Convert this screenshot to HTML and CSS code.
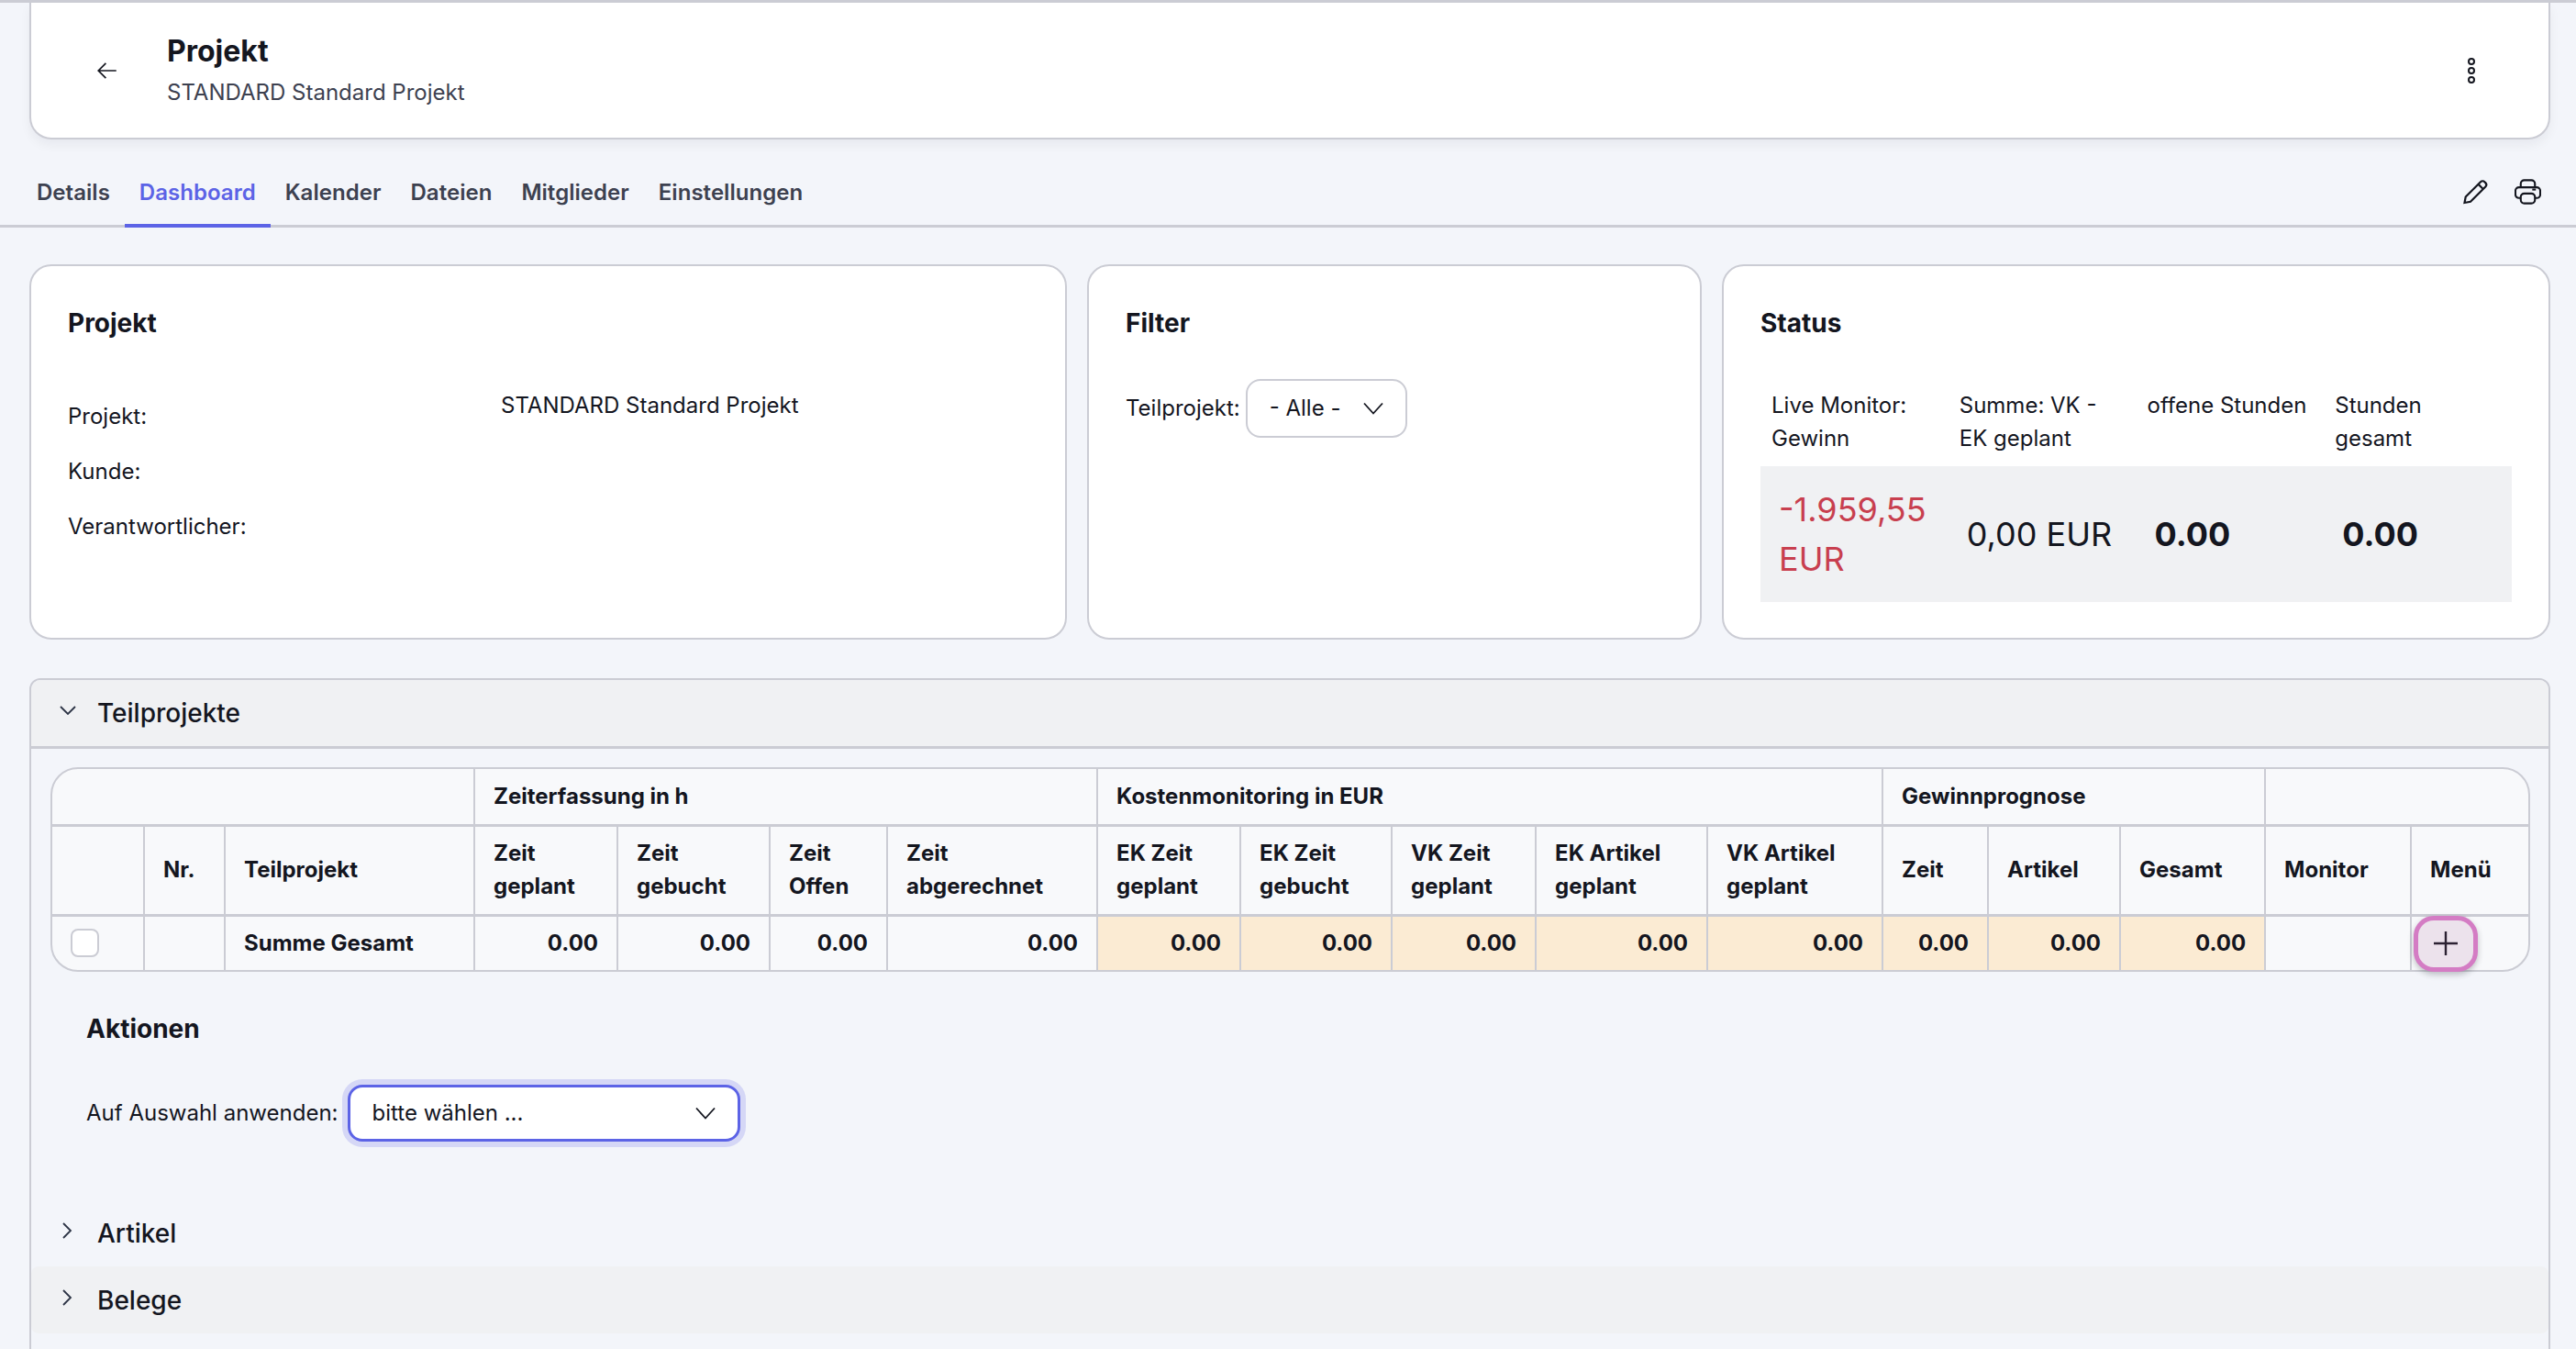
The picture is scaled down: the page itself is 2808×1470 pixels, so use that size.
FILE: index.html
```html
<!DOCTYPE html>
<html lang="de">
<head>
<meta charset="UTF-8">
<meta name="viewport" content="width=device-width, initial-scale=1.0">
<title>Projekt</title>
<link rel="stylesheet" href="styles.css">
</head>
<body>

<!-- Kopfzeile -->
<header class="page-head">
    <svg class="icon-back" viewBox="0 0 24 24"><path d="M10.5 19.5 3 12l7.5-7.5M3 12h18"/></svg>
    <div class="page-title">
        <h1>Projekt</h1>
        <p>STANDARD Standard Projekt</p>
    </div>
    <svg class="icon-more" viewBox="0 0 8 28">
        <circle cx="4" cy="4" r="3"/><circle cx="4" cy="14" r="3"/><circle cx="4" cy="24" r="3"/>
    </svg>
</header>

<!-- Tabs -->
<nav class="tabs">
    <a class="tab">Details</a>
    <a class="tab active">Dashboard</a>
    <a class="tab">Kalender</a>
    <a class="tab">Dateien</a>
    <a class="tab">Mitglieder</a>
    <a class="tab">Einstellungen</a>
    <div class="tab-tools">
        <svg class="icon-tool" viewBox="0 0 28 28"><path d="M2 26l1.200-6.500L19.500 3.200c1.300-1.300 3.200-1.300 4.400 0l.9.900c1.200 1.200 1.200 3.100 0 4.400L8.500 24.800 2 26zM17 5.700l5.300 5.300"/></svg>
        <svg class="icon-tool" viewBox="0 0 30 28"><path d="M7 9V5a4 4 0 0 1 4-4h8a4 4 0 0 1 4 4v4M7 21H5a4 4 0 0 1-4-4v-4a4 4 0 0 1 4-4h20a4 4 0 0 1 4 4v4a4 4 0 0 1-4 4h-2"/><rect x="7" y="16" width="16" height="11" rx="4"/><path d="M20 11.500h4"/></svg>
    </div>
</nav>

<!-- Karten -->
<section class="cards">
    <div class="card">
        <h2>Projekt</h2>
        <div class="info">
            <div class="info-labels">
                <div>Projekt:</div>
                <div>Kunde:</div>
                <div>Verantwortlicher:</div>
            </div>
            <div class="info-value">STANDARD Standard Projekt</div>
        </div>
    </div>
    <div class="card">
        <h2>Filter</h2>
        <div class="filter">
            <label>Teilprojekt:</label>
            <div class="select select-small">
                <span>- Alle -</span>
                <svg class="chevron" viewBox="0 0 22 14"><path d="M1 1.500l10 11 10-11"/></svg>
            </div>
        </div>
    </div>
    <div class="card">
        <h2>Status</h2>
        <div class="status">
            <div class="status-head">Live Monitor: Gewinn</div>
            <div class="status-head">Summe: VK - EK geplant</div>
            <div class="status-head">offene Stunden</div>
            <div class="status-head">Stunden gesamt</div>
            <div class="status-val negative">-1.959,55 EUR</div>
            <div class="status-val">0,00 EUR</div>
            <div class="status-val strong">0.00</div>
            <div class="status-val strong">0.00</div>
        </div>
    </div>
</section>

<!-- Akkordeon -->
<section class="accordion">
    <div class="acc-head open">
        <svg class="acc-down" viewBox="0 0 18 10"><path d="M1 1l8 8 8-8"/></svg>
        <span>Teilprojekte</span>
    </div>
    <div class="acc-body">
        <div class="table-wrap">
            <table class="grid">
                <colgroup>
                    <col class="c-check"><col class="c-nr"><col class="c-name">
                    <col class="c-a"><col class="c-b"><col class="c-c"><col class="c-d">
                    <col class="c-e"><col class="c-f"><col class="c-g"><col class="c-h"><col class="c-i">
                    <col class="c-j"><col class="c-k"><col class="c-l">
                    <col class="c-m"><col class="c-n">
                </colgroup>
                <tr class="row-group">
                    <th colspan="3"></th>
                    <th colspan="4">Zeiterfassung in h</th>
                    <th colspan="5">Kostenmonitoring in EUR</th>
                    <th colspan="3">Gewinnprognose</th>
                    <th colspan="2"></th>
                </tr>
                <tr class="row-head">
                    <th></th>
                    <th>Nr.</th>
                    <th>Teilprojekt</th>
                    <th>Zeit<br>geplant</th>
                    <th>Zeit<br>gebucht</th>
                    <th>Zeit<br>Offen</th>
                    <th>Zeit<br>abgerechnet</th>
                    <th>EK Zeit<br>geplant</th>
                    <th>EK Zeit<br>gebucht</th>
                    <th>VK Zeit<br>geplant</th>
                    <th>EK Artikel<br>geplant</th>
                    <th>VK Artikel<br>geplant</th>
                    <th>Zeit</th>
                    <th>Artikel</th>
                    <th>Gesamt</th>
                    <th>Monitor</th>
                    <th>Menü</th>
                </tr>
                <tr class="row-sum">
                    <td><span class="checkbox"></span></td>
                    <td></td>
                    <td class="name">Summe Gesamt</td>
                    <td>0.00</td>
                    <td>0.00</td>
                    <td>0.00</td>
                    <td>0.00</td>
                    <td class="cost">0.00</td>
                    <td class="cost">0.00</td>
                    <td class="cost">0.00</td>
                    <td class="cost">0.00</td>
                    <td class="cost">0.00</td>
                    <td class="cost">0.00</td>
                    <td class="cost">0.00</td>
                    <td class="cost">0.00</td>
                    <td></td>
                    <td class="menu">
                        <button class="plus-btn">
                            <svg viewBox="0 0 26 26"><path d="M13 0v26M0 13h26"/></svg>
                        </button>
                    </td>
                </tr>
            </table>
        </div>

        <div class="actions">
            <h2>Aktionen</h2>
            <div class="action-row">
                <label>Auf Auswahl anwenden:</label>
                <div class="select select-focus">
                    <span>bitte wählen ...</span>
                    <svg class="chevron" viewBox="0 0 22 14"><path d="M1 1.500l10 11 10-11"/></svg>
                </div>
            </div>
        </div>
    </div>
    <div class="acc-head closed">
        <svg class="acc-right" viewBox="0 0 10 18"><path d="M1 1l8 8-8 8"/></svg>
        <span>Artikel</span>
    </div>
    <div class="acc-head closed shaded">
        <svg class="acc-right" viewBox="0 0 10 18"><path d="M1 1l8 8-8 8"/></svg>
        <span>Belege</span>
    </div>
</section>

</body>
</html>
```

FILE: styles.css
```css
* {
    box-sizing: border-box;
}
body {
    margin: 0;
    height: 100vh;
    overflow: hidden;
    background: #f3f5fa;
    color: #14161f;
    font-family: 'Inter', sans-serif;
    font-size: 24px;
    line-height: 36px;
    border-top: 3px solid #cbccd4;
}
h1, h2, p {
    margin: 0;
}
h2 {
    font-size: 28px;
    line-height: 40px;
    font-weight: 700;
}
svg {
    display: block;
    fill: none;
    stroke: #14161f;
}

/* Kopfzeile */
.page-head {
    display: flex;
    align-items: center;
    height: 149px;
    margin: 0 28px 0 32px;
    padding: 0 80px 0 70px;
    background: #fff;
    border: 2px solid #cbccd4;
    border-top: 0;
    border-radius: 0 0 24px 24px;
    box-shadow: 0 6px 12px rgba(20, 22, 31, 0.05);
}
.icon-back {
    width: 26px;
    height: 26px;
    stroke-width: 1.6;
}
.page-title {
    flex: 1;
    margin-left: 52px;
    padding-bottom: 3px;
}
.page-title h1 {
    font-size: 32px;
    line-height: 48px;
    font-weight: 700;
}
.page-title p {
    color: #3d4150;
    margin-top: 3px;
}
.icon-more {
    width: 8px;
    height: 28px;
    stroke-width: 2;
}

/* Tabs */
.tabs {
    display: flex;
    align-items: flex-end;
    height: 96px;
    padding: 0 38px 0 24px;
    border-bottom: 3px solid #cbccd4;
}
.tab {
    height: 96px;
    padding: 40px 16px 0;
    margin-bottom: -3px;
    color: #3d4150;
    font-weight: 600;
    letter-spacing: 0.03px;
    border-bottom: 4px solid transparent;
}
.tab.active {
    color: #5c63e6;
    border-bottom-color: #5c63e6;
}
.tab-tools {
    display: flex;
    align-items: center;
    gap: 28px;
    margin-left: auto;
    padding-bottom: 22px;
}
.icon-tool {
    width: 29px;
    height: 28px;
    stroke-width: 2.2;
}

/* Karten */
.cards {
    display: grid;
    grid-template-columns: 1131px 670px 903px;
    gap: 22px;
    margin: 40px 28px 0 32px;
}
.card {
    height: 409px;
    padding: 42px 40px 0;
    background: #fff;
    border: 2px solid #cbccd4;
    border-radius: 24px;
}
.info {
    display: flex;
    margin-top: 52px;
}
.info-labels {
    width: 472px;
    padding-top: 12px;
}
.info-labels div {
    margin-bottom: 24px;
}
.filter {
    display: flex;
    align-items: center;
    gap: 6px;
    margin-top: 41px;
}
.select {
    display: flex;
    align-items: center;
    justify-content: space-between;
    background: #fff;
    border-radius: 16px;
}
.select-small {
    width: 176px;
    height: 64px;
    padding: 0 24px;
    border: 2px solid #cbccd4;
}
.select-focus {
    width: 428px;
    height: 62px;
    padding: 0 24px;
    border: 3px solid #5c63e6;
    box-shadow: 0 0 0 6px #d5d7f6;
}
.chevron {
    width: 22px;
    height: 14px;
    stroke-width: 1.8;
    flex: none;
}
.status {
    display: grid;
    grid-template-columns: repeat(4, 1fr);
    margin-top: 52px;
}
.status-head {
    padding: 0 12px 12px;
}
.status-val {
    display: flex;
    align-items: center;
    min-height: 148px;
    padding: 20px;
    background: #f0f1f3;
    font-size: 36px;
    line-height: 54px;
}
.status-val.negative {
    color: #c83f4f;
}
.status-val.strong {
    font-weight: 700;
}

/* Akkordeon */
.accordion {
    margin: 42px 28px 0 32px;
    min-height: 800px;
    border: 2px solid #cbccd4;
    border-radius: 12px 12px 0 0;
}
.acc-head {
    display: flex;
    align-items: center;
    font-size: 28px;
    line-height: 40px;
    font-weight: 500;
}
.acc-head.open {
    height: 75px;
    padding-left: 30px;
    background: #f0f1f3;
    border-bottom: 3px solid #cbccd4;
    border-radius: 10px 10px 0 0;
}
.acc-down {
    width: 20px;
    height: 10px;
    margin: -6px 22px 0 0;
    stroke-width: 1.8;
    stroke: #2c3345;
}
.acc-head.closed {
    height: 73px;
    padding-left: 33px;
}
.acc-head.shaded {
    background: #f0f1f3;
    border-radius: 8px;
}
.acc-right {
    width: 12px;
    height: 18px;
    margin: -6px 27px 0 0;
    stroke-width: 1.8;
    stroke: #2c3345;
}
.acc-body {
    padding: 20px 20px 0 21px;
}

/* Tabelle */
.table-wrap {
    width: 2703px;
    background: #f8f9fb;
    border: 2px solid #cbccd4;
    border-radius: 30px;
}
.grid {
    width: 100%;
    table-layout: fixed;
    border-collapse: collapse;
    border-style: hidden;
}
.grid th, .grid td {
    padding: 0 20px;
    border: 2px solid #cbccd4;
    font-weight: 700;
    text-align: left;
}
.grid td {
    text-align: right;
}
.grid td.name, .grid td:first-child {
    text-align: left;
}
.grid .row-group th {
    height: 61px;
    border-bottom-width: 3px;
}
.grid .row-head th {
    height: 98px;
    border-bottom-width: 3px;
}
.grid .row-sum td {
    height: 60px;
}
.grid td.cost {
    background: #fbebd3;
}
.grid td.menu {
    padding: 0;
    position: relative;
}
.c-check { width: 100px; }
.c-nr { width: 88px; }
.c-name { width: 272px; }
.c-a { width: 156px; }
.c-b { width: 166px; }
.c-c { width: 128px; }
.c-d { width: 229px; }
.c-e { width: 156px; }
.c-f { width: 165px; }
.c-g { width: 157px; }
.c-h { width: 187px; }
.c-i { width: 191px; }
.c-j { width: 115px; }
.c-k { width: 144px; }
.c-l { width: 158px; }
.c-m { width: 159px; }
.c-n { width: 129px; }
.checkbox {
    display: block;
    width: 31px;
    height: 31px;
    background: #fff;
    border: 2px solid #cbccd4;
    border-radius: 8px;
}
.plus-btn {
    display: flex;
    align-items: center;
    justify-content: center;
    position: absolute;
    left: 2px;
    top: -1px;
    width: 70px;
    height: 61px;
    padding: 0;
    background: #ece2ec;
    border: 5px solid #d47cc4;
    border-radius: 22px;
    box-shadow: 0 3px 6px rgba(20, 22, 31, 0.25);
}
.plus-btn svg {
    width: 26px;
    height: 26px;
    stroke: #2c2233;
    stroke-width: 2.4;
}

/* Aktionen */
.actions {
    height: 248px;
    padding: 42px 39px 0;
}
.action-row {
    display: flex;
    align-items: center;
    gap: 10px;
    margin-top: 41px;
}
```
